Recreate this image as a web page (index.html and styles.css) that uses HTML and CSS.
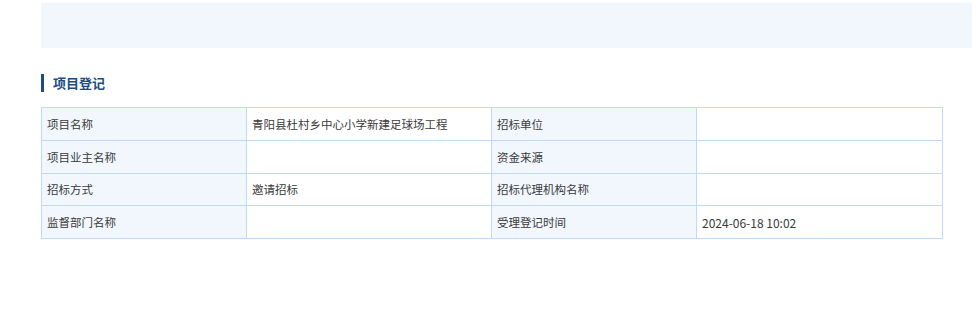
FILE: index.html
```html
<!DOCTYPE html>
<html lang="zh-CN">
<head>
<meta charset="utf-8">
<link rel="stylesheet" href="styles.css">
</head>
<body>
<div class="page">
  <div class="banner"></div>
  <h2 class="section-title">项目登记</h2>
  <table class="info">
    <colgroup>
      <col class="c1"><col class="c2"><col class="c3"><col class="c4">
    </colgroup>
    <tr>
      <td class="lbl">项目名称</td><td>青阳县杜村乡中心小学新建足球场工程</td>
      <td class="lbl">招标单位</td><td></td>
    </tr>
    <tr>
      <td class="lbl">项目业主名称</td><td></td>
      <td class="lbl">资金来源</td><td></td>
    </tr>
    <tr>
      <td class="lbl">招标方式</td><td>邀请招标</td>
      <td class="lbl">招标代理机构名称</td><td></td>
    </tr>
    <tr>
      <td class="lbl">监督部门名称</td><td></td>
      <td class="lbl">受理登记时间</td><td class="num">2024-06-18 10:02</td>
    </tr>
  </table>
</div>
</body>
</html>
```

FILE: styles.css
```css
html, body {
  margin: 0;
  padding: 0;
  background: #ffffff;
}
body {
  font-family: "Noto Sans CJK SC", "Noto Sans", sans-serif;
  color: #333333;
}
.page {
  padding: 2px 8px 0 41px;
}
.banner {
  height: 45px;
  background: #f2f7fd;
  border-top: 1px solid #f7fafe;
}
.section-title {
  margin: 26px 0 0 0;
  height: 18px;
  line-height: 18px;
  font-size: 13px;
  font-weight: bold;
  color: #1b4d82;
  border-left: 3px solid #1b4d82;
  padding-left: 9px;
}
.info {
  margin-top: 15px;
  width: 901px;
  border-collapse: collapse;
  table-layout: fixed;
  font-size: 11.5px;
}
.c1 { width: 205px; }
.c2 { width: 245px; }
.c3 { width: 205px; }
.c4 { width: 246px; }
.info td {
  border: 1px solid #bfdaf2;
  height: 31.75px;
  padding: 0 0 0 5px;
  vertical-align: middle;
  color: #3a3a3a;
}
.info td.lbl {
  background: #f2f7fd;
}
.info td.num {
  font-size: 12px;
}
```
